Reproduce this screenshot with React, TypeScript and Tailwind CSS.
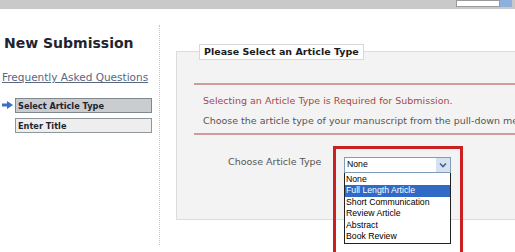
const options = [
  "None",
  "Full Length Article",
  "Short Communication",
  "Review Article",
  "Abstract",
  "Book Review",
]

const verdana = { fontFamily: '"DejaVu Sans", Verdana, sans-serif' }
const arial = { fontFamily: '"Liberation Sans", Arial, sans-serif' }

export default function App() {
  return (
    <div className="w-[515px] h-[252px] overflow-hidden bg-white" style={verdana}>
      {/* top bar */}
      <div className="h-[9px] bg-[#c9c9c9] flex justify-end items-start pr-[3px]">
        <div className="h-[7px] w-[44px] bg-white border border-[#9a9a9a]"></div>
        <div className="h-[7px] w-[12px] bg-[#8fb0dc]"></div>
      </div>

      <div className="flex pt-[16px]">
        {/* left column */}
        <div className="w-[160px] shrink-0 h-[220px] border-r border-dotted border-[#c8c8c8] pl-[4px]">
          <div className="text-[14px] font-bold text-[#1e2530] leading-none mt-[11px]">New Submission</div>
          <a className="block mt-[22px] text-[10.5px] leading-none text-[#56677f] underline -ml-[2px]">
            Frequently Asked Questions
          </a>
          <div className="mt-[15px] flex flex-col gap-[5px]">
            <div className="flex items-center">
              <svg width="11" height="8" viewBox="0 0 11 8" className="-ml-[2px] mr-[2px]">
                <path d="M0 2.5h5V0l6 4-6 4V5.5H0z" fill="#3b6fc2" />
              </svg>
              <div className="w-[137px] h-[15px] bg-[#cbcccf] border border-[#7f878f] text-[8.2px] font-bold text-[#1e2530] pl-[2px] pt-[3px] leading-none">
                Select Article Type
              </div>
            </div>
            <div className="flex items-center pl-[11px]">
              <div className="w-[137px] h-[15px] bg-[#eeeeee] border border-[#8e969e] text-[8.2px] font-bold text-[#1e2530] pl-[2px] pt-[3px] leading-none">
                Enter Title
              </div>
            </div>
          </div>
        </div>

        {/* right content */}
        <div className="flex-1 pl-[16px] pt-[19px]">
          <fieldset className="relative border border-[#dcdcdc] bg-[#f3f3f3] h-[176px] w-[360px] pl-[17px]">
            <legend className="ml-[5px] bg-white border border-[#d8d8d8] px-[4px] py-[2px] text-[9.5px] font-bold text-[#1b1b1b] leading-none">
              Please Select an Article Type
            </legend>
            <div className="mt-[23px] border-t-2 border-b-2 border-[#cf9c9c] h-[52px] pl-[9px] pt-[11px] text-[9.5px] leading-none">
              <div className="text-[#a8474a] whitespace-nowrap">Selecting an Article Type is Required for Submission.</div>
              <div className="mt-[11px] text-[#555555] whitespace-nowrap">
                Choose the article type of your manuscript from the pull-down menu below.
              </div>
            </div>
            <div className="flex items-start mt-[11px] pl-[34px]">
              <div className="text-[9.5px] text-[#555555] mt-[9px] w-[105px] whitespace-nowrap">Choose Article Type</div>
              <div className="border-[3px] border-[#cc1f22] w-[130px] h-[112px] pl-[8px] pt-[8px]">
                <div className="w-[107px] h-[16px] bg-white border border-[#7f9db9] flex items-center justify-between" style={arial}>
                  <span className="text-[8.7px] pl-[2px] text-black">None</span>
                  <span className="w-[14px] h-[14px] bg-[#d5e2f4] flex items-center justify-center">
                    <svg width="8" height="6" viewBox="0 0 8 6">
                      <path d="M1 1.5l3 3 3-3" stroke="#4d6185" strokeWidth="1.6" fill="none" />
                    </svg>
                  </span>
                </div>
                <div className="w-[107px] bg-white border border-[#222] border-t-0 pt-[1px]" style={arial}>
                  {options.map((o, i) => (
                    <div
                      key={o}
                      className={
                        "h-[11.6px] text-[8.7px] leading-[11.6px] pl-[1px] " +
                        (i === 1 ? "bg-[#3169c6] text-white" : "text-black")
                      }
                    >
                      {o}
                    </div>
                  ))}
                </div>
              </div>
            </div>
          </fieldset>
        </div>
      </div>
    </div>
  )
}
